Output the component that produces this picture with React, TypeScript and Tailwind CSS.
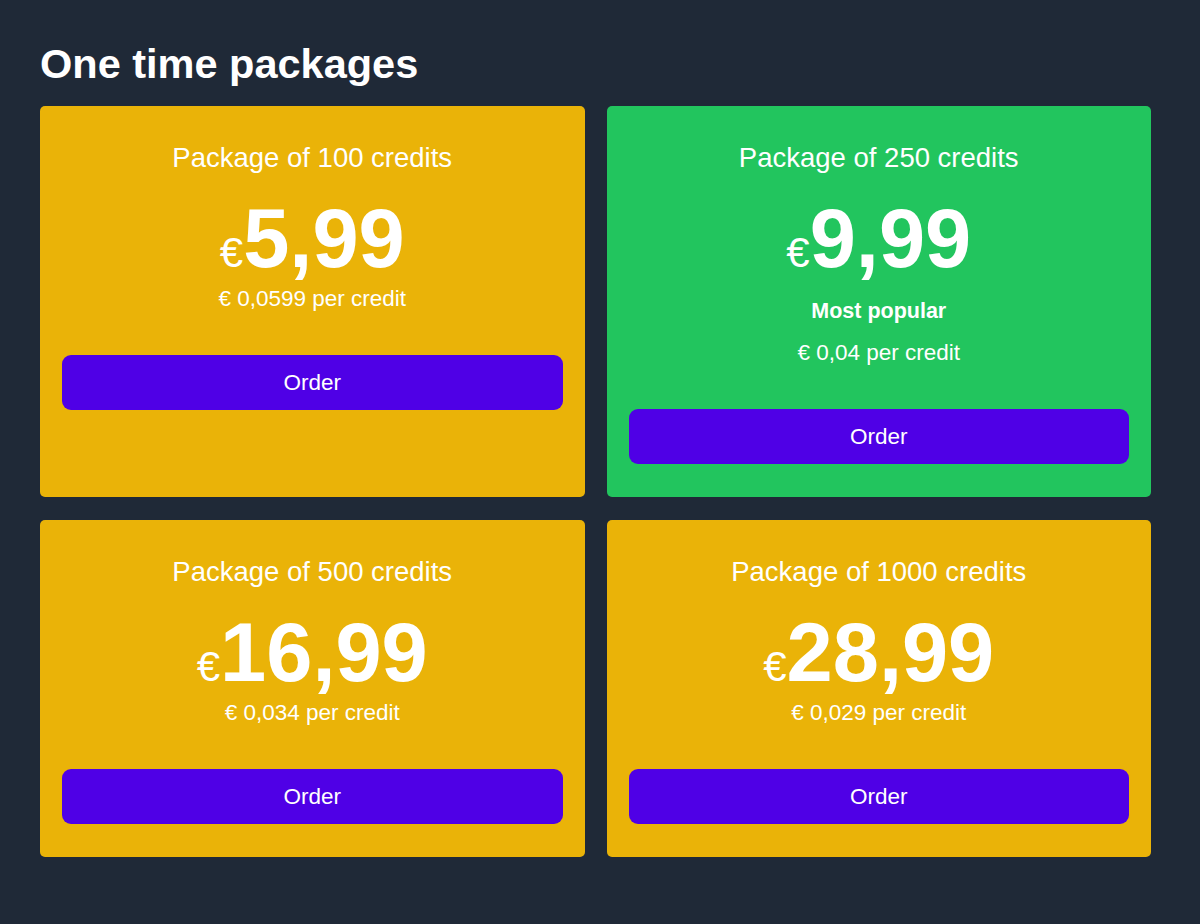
import React from "react";

type Pkg = {
    credits: number;
    price: string;
    perCredit: string;
    popular?: boolean;
};

const packages: Pkg[] = [
    { credits: 100, price: "5,99", perCredit: "€ 0,0599 per credit" },
    { credits: 250, price: "9,99", perCredit: "€ 0,04 per credit", popular: true },
    { credits: 500, price: "16,99", perCredit: "€ 0,034 per credit" },
    { credits: 1000, price: "28,99", perCredit: "€ 0,029 per credit" },
];

function PackageCard({ pkg }: { pkg: Pkg }) {
    return (
        <div
            className={`flex flex-col rounded-[5px] px-[22px] pt-[34px] pb-[33px] text-white text-center ${
                pkg.popular ? "bg-[#22c55e]" : "bg-[#eab308]"
            }`}
        >
            <h3 className="text-[27.5px] leading-[36px]">Package of {pkg.credits} credits</h3>
            <div className="mt-[21px] text-[83px] leading-none font-bold">
                <span className="text-[42px] font-normal">€</span>
                {pkg.price}
            </div>
            {pkg.popular && (
                <p className="mt-[15px] text-[21.5px] leading-[32px] font-bold">Most popular</p>
            )}
            <p className={`${pkg.popular ? "mt-[10px]" : "mt-[3px]"} text-[22.5px] leading-[32px]`}>
                {pkg.perCredit}
            </p>
            <button className="mt-[40px] h-[55px] w-full rounded-[9px] bg-[#4f00e6] text-[22.5px] text-white">
                Order
            </button>
        </div>
    );
}

export default function App() {
    return (
        <div
            className="min-h-screen bg-[#1f2937] pl-[40px] pr-[49px] pt-[39px] pb-[40px]"
            style={{ fontFamily: '"Liberation Sans", Arial, sans-serif' }}
        >
            <h1 className="text-[41.5px] leading-[50px] font-bold text-white">One time packages</h1>
            <div className="mt-[17px] grid grid-cols-2 gap-x-[22px] gap-y-[23px] items-stretch">
                {packages.map((p) => (
                    <PackageCard key={p.credits} pkg={p} />
                ))}
            </div>
        </div>
    );
}
